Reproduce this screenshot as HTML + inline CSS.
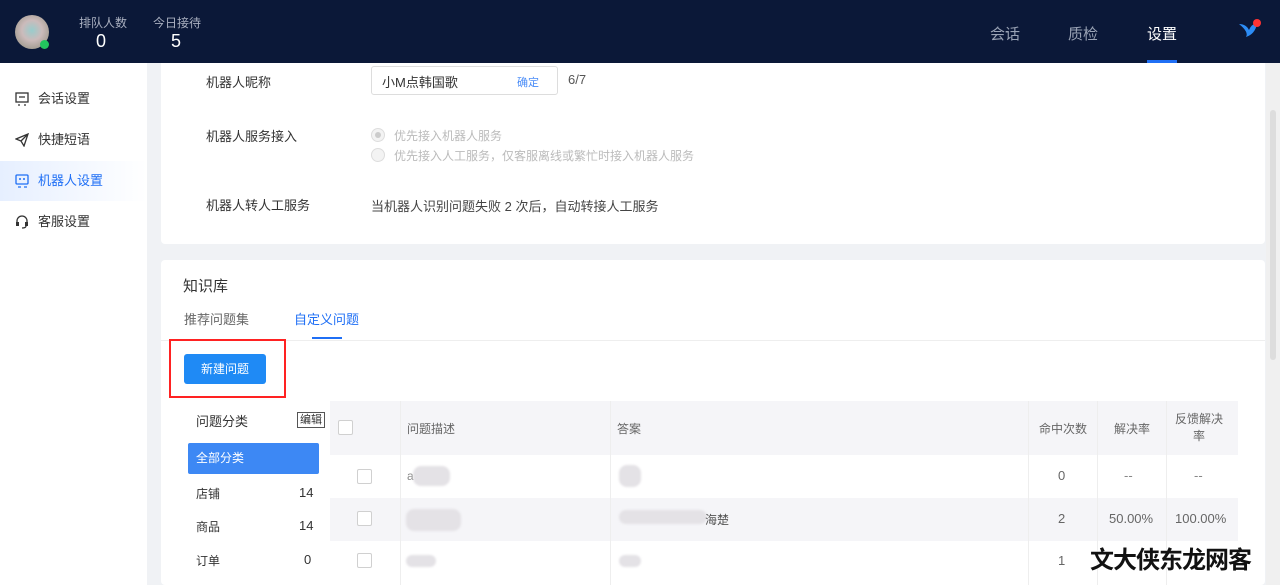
<!DOCTYPE html>
<html><head><meta charset="utf-8"><style>
*{margin:0;padding:0;box-sizing:border-box}
body{width:1280px;height:585px;overflow:hidden;background:#f0f2f5;font-family:"Liberation Sans","Noto Sans CJK SC",sans-serif;font-size:13px;color:#333;position:relative}
.abs{position:absolute}
.hdr{left:0;top:0;width:1280px;height:63px;background:#0b1838}
.side{left:0;top:63px;width:147px;height:522px;background:#fff}
.card{background:#fff;border-radius:4px}
.nav{color:#9aa3b5;font-size:15px;top:23px}
.mi{left:0;width:147px;height:40px;line-height:40px;padding-left:38px;font-size:13px;color:#333}
.mi svg{position:absolute;left:15px;top:13px}
.lbl{left:206px;font-size:13px;color:#333}
.th{top:401px;height:54px;background:#f5f5f8;font-size:12px;color:#666;line-height:54px}
.cb{width:15px;height:15px;border:1px solid #d0d0d0;background:#fff;border-radius:2px}
.blur{background:#e4e2e6;border-radius:8px;filter:blur(1px)}
</style></head><body>
<div class="abs card" style="left:161px;top:63px;width:1104px;height:181px;border-radius:0 0 4px 4px"></div>
<div class="abs hdr"></div>
<div class="abs" style="left:15px;top:15px;width:34px;height:34px;border-radius:50%;background:radial-gradient(circle at 50% 45%,#9cc 0,#cbb 40%,#887 100%)"></div>
<div class="abs" style="left:40px;top:40px;width:9px;height:9px;border-radius:50%;background:#22c55e"></div>
<div class="abs" style="left:79px;top:14px;color:#aab0c0;font-size:12px">排队人数</div>
<div class="abs" style="left:96px;top:31px;color:#fff;font-size:18px">0</div>
<div class="abs" style="left:153px;top:14px;color:#aab0c0;font-size:12px">今日接待</div>
<div class="abs" style="left:171px;top:31px;color:#fff;font-size:18px">5</div>
<div class="abs nav" style="left:990px">会话</div>
<div class="abs nav" style="left:1068px">质检</div>
<div class="abs nav" style="left:1147px;color:#fff">设置</div>
<div class="abs" style="left:1147px;top:60px;width:30px;height:3px;background:#1f6ff5"></div>
<svg class="abs" style="left:1238px;top:18px" width="24" height="22"><path d="M1 6 Q8 6 11 12 Q14 5 19 6 Q17 16 8 19 Q11 14 1 6Z" fill="#2c8cf5"/><circle cx="19" cy="5" r="4" fill="#f33"/></svg>
<div class="abs" style="left:1266px;top:63px;width:14px;height:522px;background:#f0f0f0"></div>
<div class="abs" style="left:1270px;top:110px;width:6px;height:250px;background:#ddd;border-radius:3px"></div>

<div class="abs side"></div>
<div class="abs mi" style="top:79px"><svg width="14" height="14"><rect x="1" y="1" width="12" height="9" fill="none" stroke="#333" stroke-width="1.3"/><path d="M4 5h6M3 13h2M9 13h2" stroke="#333" stroke-width="1.3"/></svg>会话设置</div>
<div class="abs mi" style="top:120px"><svg width="14" height="14"><path d="M1 6 L13 1 L9 13 L6 8Z M6 8 L13 1" fill="none" stroke="#333" stroke-width="1.3"/></svg>快捷短语</div>
<div class="abs mi" style="top:161px;background:linear-gradient(90deg,#e6efff,#fff);color:#1f6ff5"><svg width="14" height="14"><rect x="1" y="1" width="12" height="9" rx="1" fill="none" stroke="#1f6ff5" stroke-width="1.3"/><circle cx="5" cy="5" r="1" fill="#1f6ff5"/><circle cx="9" cy="5" r="1" fill="#1f6ff5"/><path d="M3 13h3M9 13h3" stroke="#1f6ff5" stroke-width="1.3"/></svg>机器人设置</div>
<div class="abs mi" style="top:202px"><svg width="14" height="14"><path d="M2 8 V6 A5 5 0 0 1 12 6 V8" fill="none" stroke="#333" stroke-width="1.3"/><rect x="1" y="7" width="3" height="4" fill="#333"/><rect x="10" y="7" width="3" height="4" fill="#333"/><path d="M11 11 Q11 13 7 13" fill="none" stroke="#333" stroke-width="1.3"/></svg>客服设置</div>

<div class="abs lbl" style="top:72px">机器人昵称</div>
<div class="abs" style="left:371px;top:66px;width:187px;height:29px;border:1px solid #ddd;border-radius:3px"></div>
<div class="abs" style="left:382px;top:72px;font-size:13px">小M点韩国歌</div>
<div class="abs" style="left:517px;top:74px;font-size:11px;color:#4a8cf7">确定</div>
<div class="abs" style="left:568px;top:72px;font-size:13px;color:#555">6/7</div>
<div class="abs lbl" style="top:126px">机器人服务接入</div>
<div class="abs" style="left:371px;top:128px;width:14px;height:14px;border-radius:50%;border:1px solid #ddd;background:#f3f3f3"><div style="margin:3px;width:6px;height:6px;border-radius:50%;background:#ccc"></div></div>
<div class="abs" style="left:394px;top:127px;font-size:12px;color:#bbb">优先接入机器人服务</div>
<div class="abs" style="left:371px;top:148px;width:14px;height:14px;border-radius:50%;border:1px solid #ddd;background:#f3f3f3"></div>
<div class="abs" style="left:394px;top:147px;font-size:12px;color:#bbb">优先接入人工服务，仅客服离线或繁忙时接入机器人服务</div>
<div class="abs lbl" style="top:195px">机器人转人工服务</div>
<div class="abs" style="left:371px;top:196px;font-size:13px;color:#444">当机器人识别问题失败 2 次后，自动转接人工服务</div>

<div class="abs card" style="left:161px;top:260px;width:1104px;height:325px"></div>
<div class="abs" style="left:183px;top:275px;font-size:15px;color:#333">知识库</div>
<div class="abs" style="left:184px;top:309px;font-size:13px;color:#666">推荐问题集</div>
<div class="abs" style="left:294px;top:309px;font-size:13px;color:#1f6ff5">自定义问题</div>
<div class="abs" style="left:312px;top:337px;width:30px;height:2px;background:#1f6ff5"></div>
<div class="abs" style="left:161px;top:340px;width:1104px;height:1px;background:#eee"></div>
<div class="abs" style="left:169px;top:339px;width:117px;height:59px;border:2px solid #f22"></div>
<div class="abs" style="left:184px;top:354px;width:82px;height:30px;background:#1f8af5;border-radius:3px;color:#fff;font-size:12px;text-align:center;line-height:30px">新建问题</div>

<div class="abs" style="left:196px;top:411px;font-size:13px">问题分类</div>
<div class="abs" style="left:297px;top:412px;width:28px;height:16px;border:1px solid #555;font-size:11px;line-height:14px;text-align:center">编辑</div>
<div class="abs" style="left:188px;top:443px;width:131px;height:31px;background:#3d88f4;border-radius:2px;color:#fff;font-size:12px;line-height:31px;padding-left:8px">全部分类</div>
<div class="abs" style="left:196px;top:485px;font-size:12px">店铺</div><div class="abs" style="left:299px;top:485px;font-size:13px">14</div>
<div class="abs" style="left:196px;top:518px;font-size:12px">商品</div><div class="abs" style="left:299px;top:518px;font-size:13px">14</div>
<div class="abs" style="left:196px;top:552px;font-size:12px">订单</div><div class="abs" style="left:304px;top:552px;font-size:13px">0</div>

<div class="abs th" style="left:330px;width:908px"></div>
<div class="abs cb" style="left:338px;top:420px"></div>
<div class="abs" style="left:407px;top:420px;font-size:12px;color:#666">问题描述</div>
<div class="abs" style="left:617px;top:420px;font-size:12px;color:#666">答案</div>
<div class="abs" style="left:1039px;top:420px;font-size:12px;color:#666">命中次数</div>
<div class="abs" style="left:1114px;top:420px;font-size:12px;color:#666">解决率</div>
<div class="abs" style="left:1174px;top:411px;font-size:12px;color:#666;width:50px;text-align:center;line-height:17px">反馈解决<br>率</div>
<div class="abs" style="left:330px;top:498px;width:908px;height:43px;background:#f5f5f8"></div>
<div class="abs" style="left:400px;top:401px;width:1px;height:184px;background:#eee"></div>
<div class="abs" style="left:610px;top:401px;width:1px;height:184px;background:#eee"></div>
<div class="abs" style="left:1028px;top:401px;width:1px;height:184px;background:#eee"></div>
<div class="abs" style="left:1097px;top:401px;width:1px;height:184px;background:#eee"></div>
<div class="abs" style="left:1166px;top:401px;width:1px;height:184px;background:#eee"></div>
<div class="abs cb" style="left:357px;top:469px"></div>
<div class="abs cb" style="left:357px;top:511px"></div>
<div class="abs cb" style="left:357px;top:553px"></div>
<div class="abs" style="left:407px;top:469px;font-size:12px;color:#888">a</div>
<div class="abs blur" style="left:413px;top:466px;width:37px;height:20px"></div>
<div class="abs blur" style="left:406px;top:509px;width:55px;height:22px"></div>
<div class="abs blur" style="left:406px;top:555px;width:30px;height:12px"></div>
<div class="abs blur" style="left:619px;top:465px;width:22px;height:22px"></div>
<div class="abs blur" style="left:619px;top:510px;width:88px;height:14px"></div>
<div class="abs" style="left:705px;top:511px;font-size:12px;color:#555">海楚</div>
<div class="abs blur" style="left:619px;top:555px;width:22px;height:12px"></div>
<div class="abs" style="left:1058px;top:468px;font-size:13px;color:#666">0</div>
<div class="abs" style="left:1124px;top:468px;font-size:13px;color:#888">--</div>
<div class="abs" style="left:1194px;top:468px;font-size:13px;color:#888">--</div>
<div class="abs" style="left:1058px;top:511px;font-size:13px;color:#666">2</div>
<div class="abs" style="left:1109px;top:511px;font-size:13px;color:#666">50.00%</div>
<div class="abs" style="left:1175px;top:511px;font-size:13px;color:#666">100.00%</div>
<div class="abs" style="left:1058px;top:553px;font-size:13px;color:#666">1</div>
<div class="abs" style="left:1090px;top:540px;font-size:24px;color:#111;font-weight:bold;letter-spacing:-1px;text-shadow:0 0 2px #fff,0 0 2px #fff">文大侠东龙网客</div>
</body></html>
